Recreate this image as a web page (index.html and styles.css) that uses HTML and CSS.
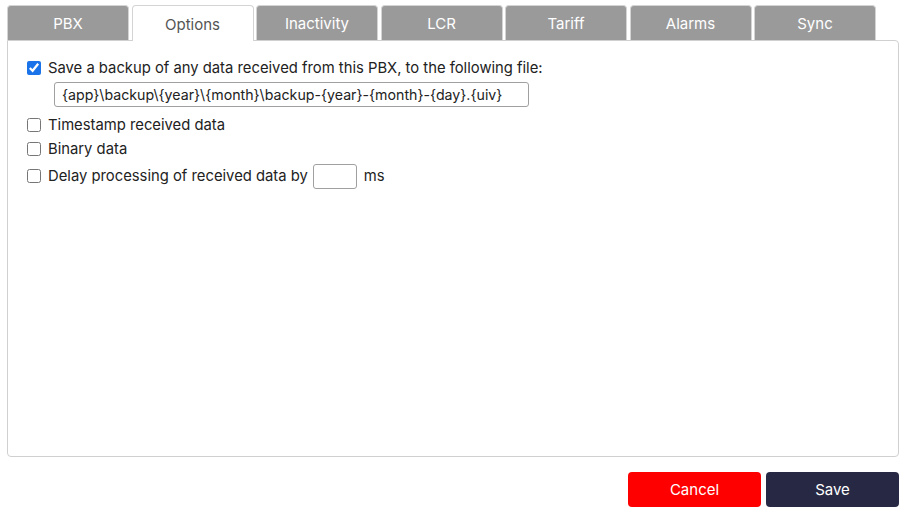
FILE: index.html
```html
<!DOCTYPE html>
<html>
<head>
<meta charset="utf-8">
<link rel="stylesheet" href="styles.css">
</head>
<body>
<div class="app">
  <div class="tabs">
    <div class="tab">PBX</div>
    <div class="tab active">Options</div>
    <div class="tab">Inactivity</div>
    <div class="tab">LCR</div>
    <div class="tab">Tariff</div>
    <div class="tab">Alarms</div>
    <div class="tab">Sync</div>
  </div>
  <div class="panel">
    <label class="row row-first"><input type="checkbox" class="cb" checked><span>Save a backup of any data received from this PBX, to the following file:</span></label>
    <div class="file-row"><input type="text" class="file-input" value="{app}\backup\{year}\{month}\backup-{year}-{month}-{day}.{uiv}"></div>
    <label class="row row-gap"><input type="checkbox" class="cb"><span>Timestamp received data</span></label>
    <label class="row"><input type="checkbox" class="cb"><span>Binary data</span></label>
    <label class="row row-delay"><input type="checkbox" class="cb"><span>Delay processing of received data by</span><input type="text" class="ms-input"><span class="ms">ms</span></label>
  </div>
  <div class="actions">
    <button class="btn btn-cancel">Cancel</button>
    <button class="btn btn-save">Save</button>
  </div>
</div>
</body>
</html>
```
FILE: styles.css
```css
* { box-sizing: border-box; }
html, body { margin: 0; padding: 0; background: #fff; }
body { font-family: "Inter", "Liberation Sans", sans-serif; color: #222; }
.app { padding: 5px 6px 0 7px; width: 905px; }
.tabs { display: flex; gap: 2.5px; height: 35px; position: relative; z-index: 1; }
.tab {
  width: 122px; height: 35px;
  border: 1px solid #d4d4d4; border-bottom: none;
  border-radius: 4px 4px 0 0;
  background: #9a9a9a; color: #fff;
  font-size: 15px;
  display: flex; align-items: center; justify-content: center;
  padding-top: 1px;
}
.tab.active { background: #fff; color: #555; height: 36px; }
.panel {
  height: 417px;
  border: 1px solid #d0d0d0;
  border-radius: 0 4px 4px 4px;
  padding: 15px 0 0 19px;
  font-size: 14.8px;
}
.row { display: flex; align-items: center; height: 24px; }
.row-gap { margin-top: 6px; }
.row-delay { height: 28px; margin-top: 1px; }
.cb {
  width: 14px; height: 14px; margin: 0 7px 0 0;
  accent-color: #1a73e8;
}
.file-row { padding-left: 27px; margin-top: 2px; }
.file-input {
  width: 475px; height: 25px;
  border: 1px solid #a0a0a0; border-radius: 3px;
  font: 14.2px "Inter", "Liberation Sans", sans-serif; color: #222;
  padding: 0 7px; margin: 0;
}
.ms-input {
  width: 44px; height: 25px; margin: 0 0 0 5px;
  border: 1px solid #a0a0a0; border-radius: 3px;
  padding: 0 4px;
}
.ms { margin-left: 7px; }
.actions { display: flex; justify-content: flex-end; gap: 5px; margin-top: 15px; }
.btn {
  width: 133px; height: 35px; border: none; border-radius: 4px;
  color: #fff; font: 15px "Inter", "Liberation Sans", sans-serif;
}
.btn-cancel { background: #ff0000; }
.btn-save { background: #272944; }
```
